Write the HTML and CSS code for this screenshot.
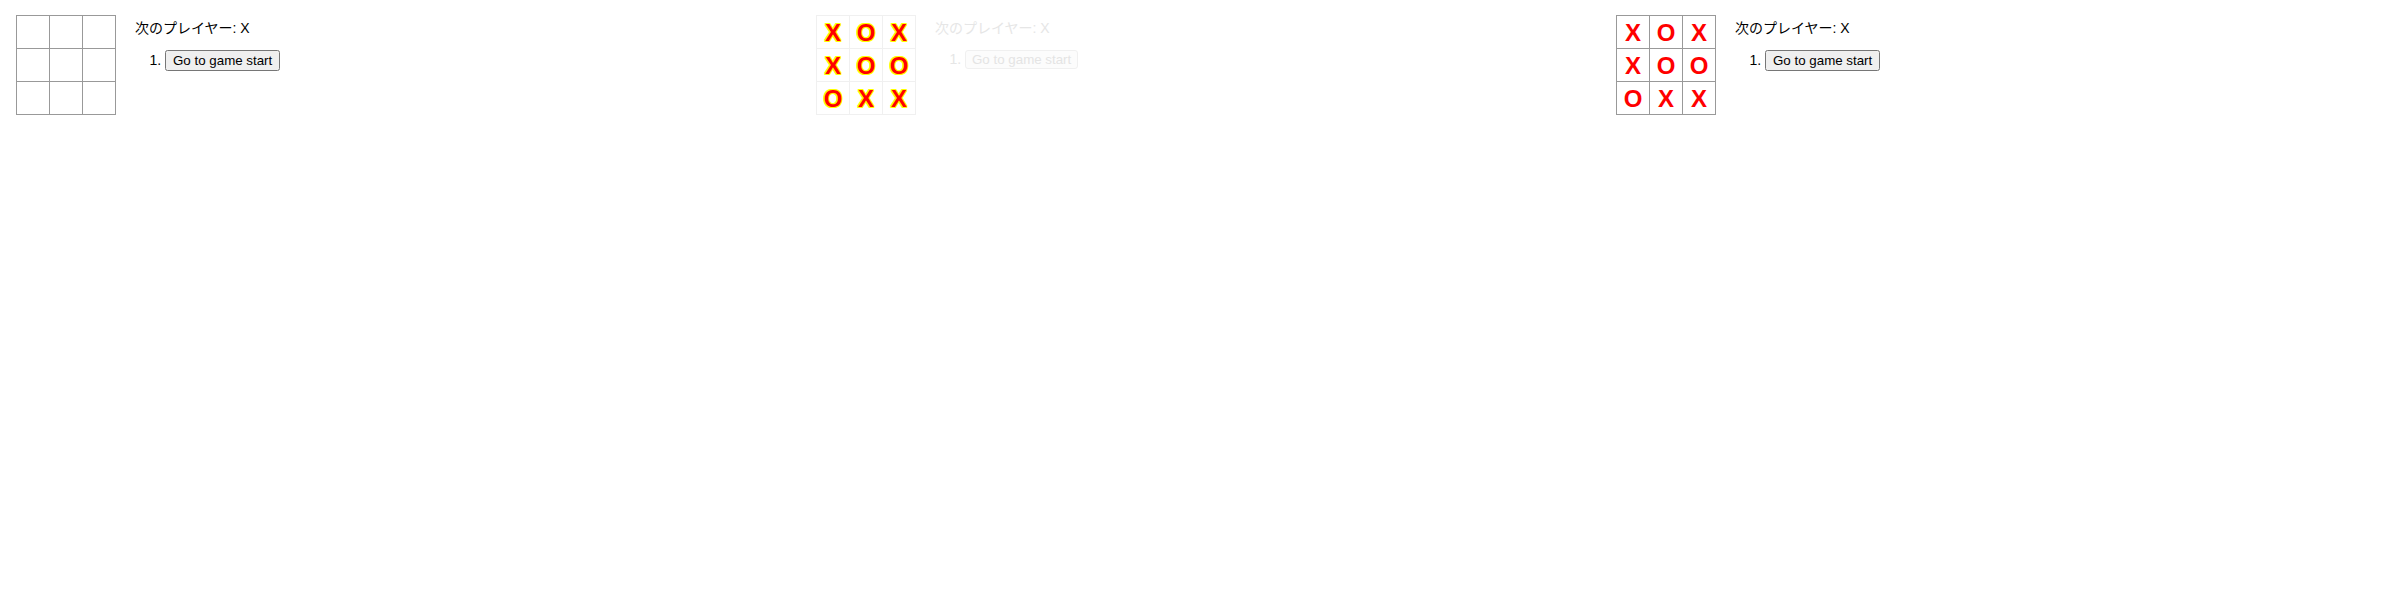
FILE: index.html
```html
<!DOCTYPE html>
<html lang="ja">
<head>
<meta charset="utf-8">
<title>Tic-Tac-Toe</title>
<link rel="stylesheet" href="styles.css">
</head>
<body>
<div class="panels">
  <div class="panel">
    <div class="game">
      <div class="game-board">
        <div class="board-row"><button class="square"></button><button class="square"></button><button class="square"></button></div>
        <div class="board-row"><button class="square"></button><button class="square"></button><button class="square"></button></div>
        <div class="board-row"><button class="square"></button><button class="square"></button><button class="square"></button></div>
      </div>
      <div class="game-info">
        <div class="status">次のプレイヤー: X</div>
        <ol class="moves"><li><button class="move">Go to game start</button></li></ol>
      </div>
    </div>
  </div>
  <div class="panel panel-faded">
    <div class="game">
      <div class="game-board">
        <div class="board-row"><button class="square">X</button><button class="square">O</button><button class="square">X</button></div>
        <div class="board-row"><button class="square">X</button><button class="square">O</button><button class="square">O</button></div>
        <div class="board-row"><button class="square">O</button><button class="square">X</button><button class="square">X</button></div>
      </div>
      <div class="game-info">
        <div class="status">次のプレイヤー: X</div>
        <ol class="moves"><li><button class="move">Go to game start</button></li></ol>
      </div>
    </div>
  </div>
  <div class="panel panel-red">
    <div class="game">
      <div class="game-board">
        <div class="board-row"><button class="square">X</button><button class="square">O</button><button class="square">X</button></div>
        <div class="board-row"><button class="square">X</button><button class="square">O</button><button class="square">O</button></div>
        <div class="board-row"><button class="square">O</button><button class="square">X</button><button class="square">X</button></div>
      </div>
      <div class="game-info">
        <div class="status">次のプレイヤー: X</div>
        <ol class="moves"><li><button class="move">Go to game start</button></li></ol>
      </div>
    </div>
  </div>
</div>
</body>
</html>
```
FILE: styles.css
```css
html, body {
  margin: 0;
  padding: 0;
  background: #fff;
}
body {
  font: 14px "Liberation Sans", "Noto Sans CJK JP", Arial, sans-serif;
  color: #000;
}
.panels {
  display: flex;
  flex-direction: row;
  width: 2400px;
}
.panel {
  width: 800px;
  box-sizing: border-box;
  padding: 16px;
}
.game {
  display: flex;
  flex-direction: row;
  align-items: flex-start;
}
.board-row {
  display: flex;
}
.square {
  background: #fff;
  border: 1px solid #999;
  font-family: "Liberation Sans", Arial, sans-serif;
  font-size: 24px;
  font-weight: bold;
  line-height: 34px;
  height: 34px;
  width: 34px;
  margin: -1px -1px 0 0;
  padding: 0;
  text-align: center;
  color: #000;
  box-sizing: border-box;
}
.game-info {
  margin-left: 20px;
}
.status {
  line-height: 16px;
  margin-top: 4px;
  margin-bottom: 10px;
}
.moves {
  padding-left: 30px;
  margin: 14px 0;
}
.move {
  font-family: "Liberation Sans", Arial, sans-serif;
  font-size: 13.333px;
}
.panel-red .square {
  color: #f00;
}
.panel-faded .square {
  color: #f00;
  border-color: #f0f0f0;
  text-shadow: 1px 0 #ff0, -1px 0 #ff0, 0 1px #ff0, 0 -1px #ff0, 1px 1px #ff0, -1px -1px #ff0, 1px -1px #ff0, -1px 1px #ff0;
}
.panel-faded .status,
.panel-faded .moves {
  color: #e6e6e6;
}
.panel-faded .move {
  color: #e4e4e4;
  background: #fcfcfc;
  border: 1px solid #f0f0f0;
  border-radius: 3px;
  padding: 1px 6px;
}
```
